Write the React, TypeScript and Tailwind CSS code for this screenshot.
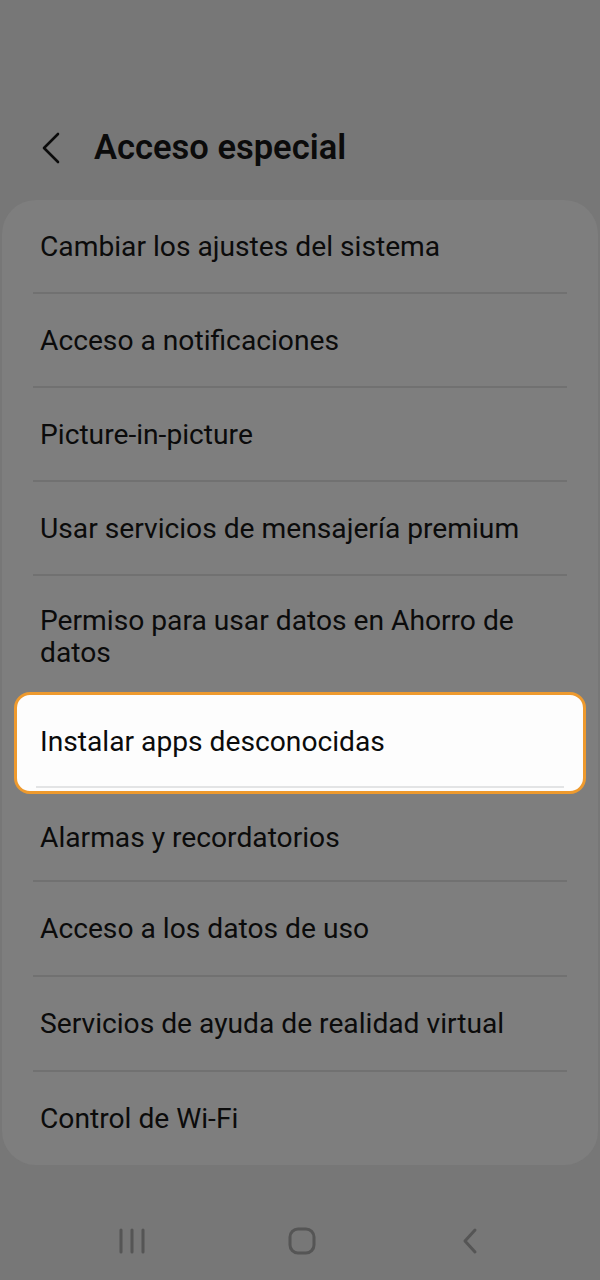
export default function App() {
  const rows = [
    "Cambiar los ajustes del sistema",
    "Acceso a notificaciones",
    "Picture-in-picture",
    "Usar servicios de mensajería premium",
  ];
  const after = [
    "Alarmas y recordatorios",
    "Acceso a los datos de uso",
    "Servicios de ayuda de realidad virtual",
  ];

  return (
    <div className="w-[600px] h-[1280px] bg-[#777777] flex flex-col font-['Roboto',sans-serif] text-[#0b0b0b]">
      {/* header */}
      <div className="h-[200px] flex items-center pt-[96px] shrink-0">
        <div className="w-[94px] flex items-center pl-[40px]">
          <svg width="22" height="32" viewBox="0 0 22 32" fill="none">
            <path d="M18 2 L4 16 L18 30" stroke="#0b0b0b" strokeWidth="2.6" strokeLinecap="round" strokeLinejoin="round" />
          </svg>
        </div>
        <h1 className="text-[34.5px] font-semibold">Acceso especial</h1>
      </div>

      {/* list card */}
      <div className="mx-[2px] rounded-[34px] bg-[#7e7e7e] flex flex-col shrink-0">
        {rows.map((r) => (
          <div key={r} className="flex flex-col">
            <div className="h-[92px] flex items-center pl-[38px] pt-[2px] text-[28.2px]">{r}</div>
            <div className="mx-[31px] h-[2px] bg-[#717171]" />
          </div>
        ))}
        <div className="h-[116px] flex items-center pl-[38px] pr-[40px] pt-[6px] text-[28.2px] leading-[32px]">
          Permiso para usar datos en Ahorro de datos
        </div>
        <div className="mx-[12px] h-[102px] rounded-[16px] border-[3px] border-[#ee9a2e] bg-[#fdfdfd] flex flex-col">
          <div className="flex-1 flex items-center pl-[23px] text-[28.2px] pt-[4px]">Instalar apps desconocidas</div>
          <div className="mx-[19px] mb-[3px] h-[2px] bg-[#e3e4e5]" />
        </div>
        {after.map((r, i) => (
          <div key={r} className="flex flex-col">
            <div className={`${i === 0 ? "h-[86px]" : "h-[93px]"} flex items-center pl-[38px] pt-[2px] text-[28.2px]`}>{r}</div>
            <div className="mx-[31px] h-[2px] bg-[#717171]" />
          </div>
        ))}
        <div className="h-[93px] flex items-center pl-[38px] pt-[2px] text-[28.2px]">Control de Wi-Fi</div>
      </div>

      {/* nav bar */}
      <div className="flex-1 flex items-center pl-[118px] pt-[36px]">
        <svg width="28" height="26" viewBox="0 0 28 26" fill="none">
          <path d="M3 2 V24 M14 2 V24 M25 2 V24" stroke="#555555" strokeWidth="3" strokeLinecap="round" />
        </svg>
        <svg width="28" height="28" viewBox="0 0 28 28" fill="none" className="ml-[142px]">
          <rect x="2" y="2" width="24" height="24" rx="8" stroke="#555555" strokeWidth="3" />
        </svg>
        <svg width="20" height="28" viewBox="0 0 20 28" fill="none" className="ml-[144px]">
          <path d="M15 3 L5 14 L15 25" stroke="#555555" strokeWidth="3" strokeLinecap="round" strokeLinejoin="round" />
        </svg>
      </div>
    </div>
  );
}
